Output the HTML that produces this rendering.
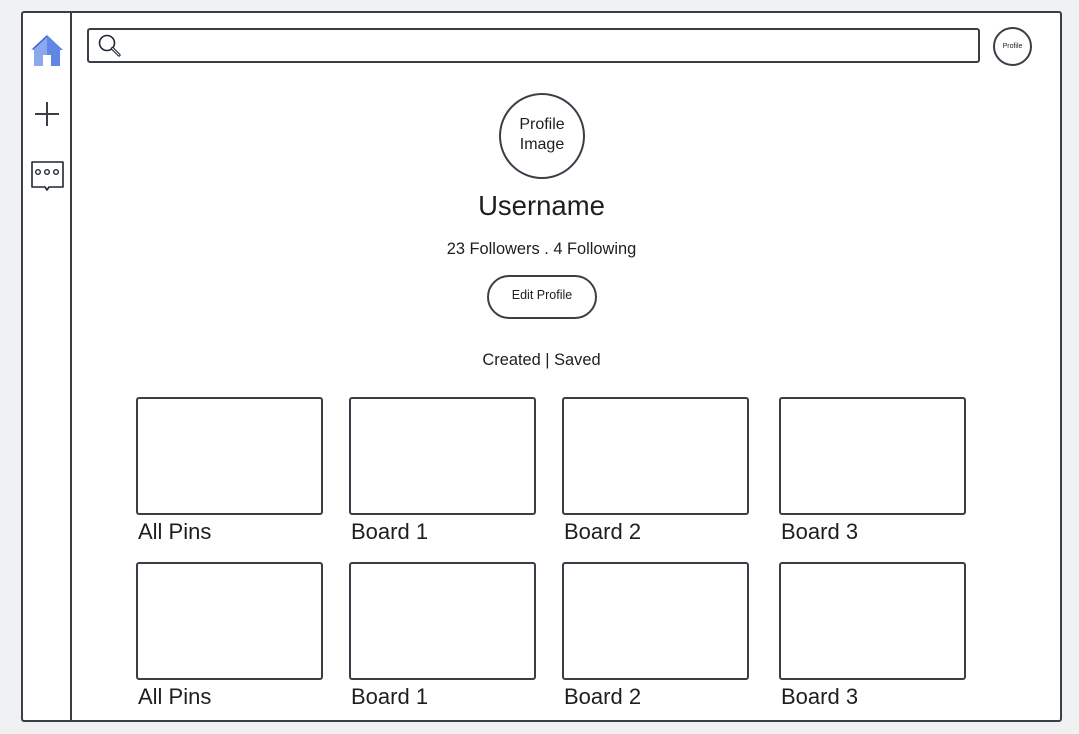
<!DOCTYPE html>
<html><head><meta charset="utf-8"><style>
body{margin:0;width:1079px;height:734px;background:#f0f1f3;position:relative;overflow:hidden;font-family:"Liberation Sans",sans-serif;color:#1e1e1e}
.a{position:absolute;box-sizing:border-box}
.b{border:2px solid #3a3f47;border-radius:3px;background:#fff}
.t{position:absolute;white-space:nowrap}
.lbl{font-size:22px}
</style></head><body>
<div class="a b" style="left:21px;top:11px;width:1041px;height:711px"></div>
<div class="a" style="left:70px;top:12px;width:2px;height:709px;background:#3a3f47"></div>
<svg class="a" style="left:28px;top:32px" width="40" height="38" viewBox="28 32 40 38">
<polygon points="47,35 31,50 34,50 34,66 47,66 47,35" fill="#8aa9ec"/>
<polygon points="47,35 63,50 60,50 60,66 47,66" fill="#5f87e6"/>
<line x1="33" y1="49" x2="47" y2="36" stroke="#3d63d6" stroke-width="1.5"/>
<rect x="43" y="55" width="8" height="11" fill="#fff"/>
</svg>
<svg class="a" style="left:34px;top:101px" width="26" height="26"><path d="M13 1V25M1 13H25" stroke="#3a3f47" stroke-width="2"/></svg>
<svg class="a" style="left:30px;top:160px" width="36" height="32"><path d="M2 2H33V27H19L17 30L15 27H2Z" fill="#fff" stroke="#1f2733" stroke-width="1.6" stroke-linejoin="round"/><circle cx="8" cy="12" r="2.3" fill="none" stroke="#1f2733" stroke-width="1.4"/><circle cx="17" cy="12" r="2.3" fill="none" stroke="#1f2733" stroke-width="1.4"/><circle cx="26" cy="12" r="2.3" fill="none" stroke="#1f2733" stroke-width="1.4"/></svg>
<div class="a b" style="left:87px;top:28px;width:893px;height:35px"></div>
<svg class="a" style="left:97px;top:33px" width="26" height="26"><circle cx="10" cy="10" r="7.5" fill="none" stroke="#1f2733" stroke-width="1.6"/><path d="M15.5 15.5L22 22" stroke="#1f2733" stroke-width="3.2" stroke-linecap="round"/><path d="M15.5 15.5L22 22" stroke="#fff" stroke-width="1" stroke-linecap="round"/></svg>
<div class="a" style="left:993px;top:27px;width:39px;height:39px;border:2px solid #3a3f47;border-radius:50%;font-size:7px;display:flex;align-items:center;justify-content:center">Profile</div>
<div class="a" style="left:499px;top:93px;width:86px;height:86px;border:2px solid #3a3f47;border-radius:50%;font-size:16px;display:flex;align-items:center;justify-content:center;text-align:center;line-height:20px;padding-bottom:3px">Profile<br>Image</div>
<div class="t" style="left:0;width:1083px;text-align:center;top:190px;font-size:27.5px">Username</div>
<div class="t" style="left:0;width:1083px;text-align:center;top:240px;font-size:16.4px">23 Followers . 4 Following</div>
<div class="a" style="left:487px;top:275px;width:110px;height:44px;border:2px solid #3a3f47;border-radius:22px;font-size:12.5px;display:flex;align-items:center;justify-content:center;padding-bottom:4px">Edit Profile</div>
<div class="t" style="left:0;width:1083px;text-align:center;top:351px;font-size:16.4px">Created | Saved</div>

<div class="a b" style="left:136px;top:397px;width:187px;height:118px"></div>
<div class="a b" style="left:349px;top:397px;width:187px;height:118px"></div>
<div class="a b" style="left:562px;top:397px;width:187px;height:118px"></div>
<div class="a b" style="left:779px;top:397px;width:187px;height:118px"></div>
<div class="t lbl" style="left:138px;top:519px">All Pins</div>
<div class="t lbl" style="left:351px;top:519px">Board 1</div>
<div class="t lbl" style="left:564px;top:519px">Board 2</div>
<div class="t lbl" style="left:781px;top:519px">Board 3</div>

<div class="a b" style="left:136px;top:562px;width:187px;height:118px"></div>
<div class="a b" style="left:349px;top:562px;width:187px;height:118px"></div>
<div class="a b" style="left:562px;top:562px;width:187px;height:118px"></div>
<div class="a b" style="left:779px;top:562px;width:187px;height:118px"></div>
<div class="t lbl" style="left:138px;top:684px">All Pins</div>
<div class="t lbl" style="left:351px;top:684px">Board 1</div>
<div class="t lbl" style="left:564px;top:684px">Board 2</div>
<div class="t lbl" style="left:781px;top:684px">Board 3</div>
</body></html>
